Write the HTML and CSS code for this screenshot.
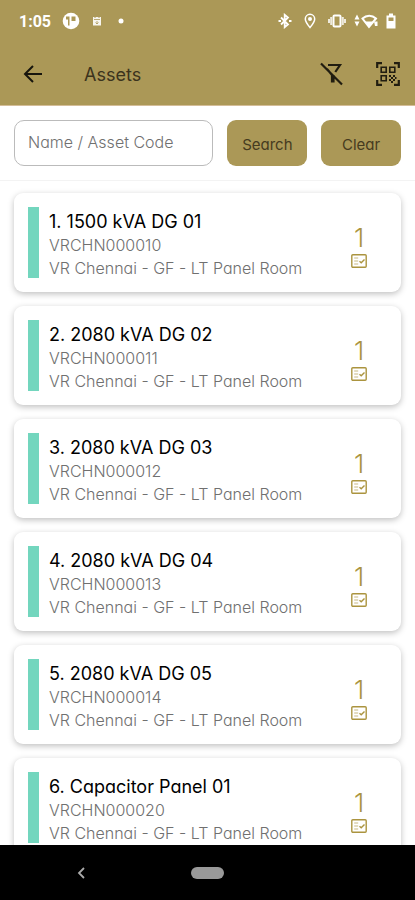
FILE: index.html
```html
<!DOCTYPE html>
<html lang="en">
<head>
<meta charset="utf-8">
<meta name="viewport" content="width=device-width, initial-scale=1">
<title>Assets</title>
<link rel="stylesheet" href="styles.css">
</head>
<body>
<svg class="defs" aria-hidden="true">
  <symbol id="checklist" viewBox="0 0 18 16">
    <rect x="1.8" y="1.8" width="14.4" height="12.4" rx="1" fill="none" stroke="currentColor" stroke-width="1.4"/>
    <path d="M4.2 5h4M4.2 8h4M4.2 11h4" stroke="currentColor" stroke-width="1" opacity=".65"/>
    <path d="M9.5 8.3l1.7 1.5 3.3-3.3" fill="none" stroke="currentColor" stroke-width="1.4"/>
  </symbol>
</svg>
<header class="top">
  <div class="status">
    <div class="status-left">
      <span class="time">1:05</span>
      <svg width="18" height="18" viewBox="0 0 18 18"><circle cx="9" cy="9" r="8.3" fill="#fff"/><path d="M4 4.500h3.500v9H6v-6H4zM9.500 4.500h4v4.500h-4z" fill="#ab9857"/></svg>
      <svg width="10" height="10" viewBox="0 0 10 10"><path d="M1 1h1.5v1h1V1h3v1h1V1H9v8.5H1z" fill="#fff" opacity=".9"/><path d="M2 3.5h6M5 5v3M3.5 6.5L5 8l1.5-1.5" fill="none" stroke="#ab9857" stroke-width=".8"/></svg>
      <svg width="6" height="6" viewBox="0 0 6 6"><circle cx="3" cy="3" r="2.5" fill="#fff"/></svg>
    </div>
    <div class="status-right">
      <svg width="14" height="16" viewBox="0 0 14 16"><path d="M3 4.5l7 7L6.700 14.200V1.800L10 4.500l-7 7" fill="none" stroke="#fff" stroke-width="1.800"/><path d="M.5 8h2.500M11 8h2.500" stroke="#fff" stroke-width="1.800"/></svg>
      <svg width="12" height="16" viewBox="0 0 12 16"><path d="M6 14.500C3 11 1.300 8.500 1.300 6a4.700 4.700 0 0 1 9.400 0c0 2.500-1.700 5-4.700 8.500z" fill="none" stroke="#fff" stroke-width="1.500"/><circle cx="6" cy="6" r="2" fill="#fff"/></svg>
      <svg width="18" height="16" viewBox="0 0 18 16"><rect x="5.500" y="2.500" width="7" height="11" rx="1" fill="none" stroke="#fff" stroke-width="2"/><path d="M3.200 4v8M14.800 4v8M1 6v4M17 6v4" stroke="#fff" stroke-width="2" opacity=".8"/></svg>
      <svg class="wifi" width="24" height="16" viewBox="0 0 24 16"><path d="M3 1.500l2.500 5h-5zM3 13.500l2.500-5h-5z" fill="#fff"/><path d="M8.500 5.500c4-3.700 9.500-3.700 13.500 0L15 14z" fill="none" stroke="#fff" stroke-width="2"/><path d="M11 8.500h8L15 14zM20 8.500h3.500V13H21z" fill="#fff"/></svg>
      <svg width="10" height="16" viewBox="0 0 10 16"><path d="M3 .5h4v2h2.500v13H.5v-13H3z" fill="#fff"/><path d="M2.500 4.500h5V8h-5z" fill="#ab9857"/></svg>
    </div>
  </div>
  <div class="appbar">
    <button class="icon-button" aria-label="Back"><svg width="24" height="24" viewBox="0 0 24 24"><path d="M21 12H4M12 4l-8 8 8 8" fill="none" stroke="#17150d" stroke-width="2"/></svg></button>
    <h1>Assets</h1>
    <button class="icon-button" aria-label="Clear filters"><svg width="24" height="24" viewBox="0 0 24 24"><path d="M1 1.500l21 21M8 3h12L15.300 10M7 7l5 6v6.500h1.500V13" fill="none" stroke="#211d10" stroke-width="2.200"/></svg></button>
    <button class="icon-button" aria-label="Scan code"><svg width="24" height="24" viewBox="0 0 24 24" fill="none" stroke="#211d10"><path d="M1.200 6V1.200H6M18 1.200h4.800V6M1.200 18v4.800H6M18 22.800h4.800V18" stroke-width="2.200"/><path d="M5.200 5.200h5v5h-5zM13.800 5.200h5v5h-5zM5.200 13.800h5v5h-5z" stroke-width="1.600"/><path d="M13 14h2M17 14h2M15 16h2M13 18h2M17 18h2M19 16h1.500M15 20h2" stroke-width="2"/></svg></button>
  </div>
</header>
<form class="search">
  <input type="text" aria-label="Name / Asset Code" placeholder="Name / Asset Code">
  <button type="button">Search</button>
  <button type="button">Clear</button>
</form>
<main>
  <ul class="assets">
    <li class="card"><span class="bar"></span><div class="info"><h2>1. 1500 kVA DG 01</h2><p>VRCHN000010</p><p>VR Chennai - GF - LT Panel Room</p></div><div class="count"><span>1</span><svg width="18" height="16"><use href="#checklist"/></svg></div></li>
    <li class="card"><span class="bar"></span><div class="info"><h2>2. 2080 kVA DG 02</h2><p>VRCHN000011</p><p>VR Chennai - GF - LT Panel Room</p></div><div class="count"><span>1</span><svg width="18" height="16"><use href="#checklist"/></svg></div></li>
    <li class="card"><span class="bar"></span><div class="info"><h2>3. 2080 kVA DG 03</h2><p>VRCHN000012</p><p>VR Chennai - GF - LT Panel Room</p></div><div class="count"><span>1</span><svg width="18" height="16"><use href="#checklist"/></svg></div></li>
    <li class="card"><span class="bar"></span><div class="info"><h2>4. 2080 kVA DG 04</h2><p>VRCHN000013</p><p>VR Chennai - GF - LT Panel Room</p></div><div class="count"><span>1</span><svg width="18" height="16"><use href="#checklist"/></svg></div></li>
    <li class="card"><span class="bar"></span><div class="info"><h2>5. 2080 kVA DG 05</h2><p>VRCHN000014</p><p>VR Chennai - GF - LT Panel Room</p></div><div class="count"><span>1</span><svg width="18" height="16"><use href="#checklist"/></svg></div></li>
    <li class="card"><span class="bar"></span><div class="info"><h2>6. Capacitor Panel 01</h2><p>VRCHN000020</p><p>VR Chennai - GF - LT Panel Room</p></div><div class="count"><span>1</span><svg width="18" height="16"><use href="#checklist"/></svg></div></li>
  </ul>
</main>
<nav class="system">
  <button aria-label="System back"><svg width="10" height="14" viewBox="0 0 10 14"><path d="M8 2L3 7l5 5" fill="none" stroke="#aaa" stroke-width="1.800"/></svg></button>
  <button class="home" aria-label="Home"></button>
</nav>
</body>
</html>
```
FILE: styles.css
```css
* { box-sizing: border-box; }
body {
  margin: 0;
  height: 100vh;
  display: flex;
  flex-direction: column;
  overflow: hidden;
  background: #fff;
  font-family: Inter, "Liberation Sans", sans-serif;
  font-feature-settings: "cv11";
}
h1, h2, p, ul { margin: 0; padding: 0; font-weight: 400; }
button, input { font: inherit; font-feature-settings: inherit; }
button { padding: 0; border: 0; background: none; }
svg { display: block; }
.defs { position: absolute; width: 0; height: 0; }

.top { background: #ab9857; border-bottom: 1px solid #d4bd98; }
.status {
  height: 42px;
  padding: 0 19px;
  display: flex;
  align-items: center;
  justify-content: space-between;
}
.status-left { display: flex; align-items: center; gap: 12px; }
.status-left svg:last-child { margin-left: 4px; }
.status-left svg:nth-child(2) { margin-left: -1px; }
.status-right { display: flex; align-items: center; gap: 12px; }
.wifi { margin: 0 -4px; }
.time { color: #fff; font: 700 16px Roboto, sans-serif; }
.appbar {
  height: 63px;
  padding: 0 15px 0 21px;
  display: flex;
  align-items: center;
  gap: 32px;
}
.appbar h1 { flex: 1; padding: 2px 0 0 7px; font-size: 18px; color: #3b331d; }

.search {
  padding: 14px;
  display: grid;
  grid-template-columns: 5fr 2fr 2fr;
  gap: 14px;
  border-bottom: 1px solid #f3f3f3;
}
.search input {
  width: 100%;
  min-width: 0;
  height: 46px;
  padding: 0 13px 2px;
  border: 1px solid #bbb;
  border-radius: 10px;
  background: #fff;
  font-size: 16px;
  font-weight: 300;
}
.search input::placeholder { color: #707070; opacity: 1; }
.search button {
  height: 46px;
  padding-top: 2px;
  border-radius: 9px;
  background: #ab9857;
  color: #463b20;
  font-size: 15px;
}

main { flex: 1; min-height: 0; overflow: hidden; }
.assets {
  padding: 12px 14px;
  display: flex;
  flex-direction: column;
  gap: 14px;
  list-style: none;
}
.card {
  flex: none;
  padding: 14px 14px 12px;
  display: flex;
  gap: 10px;
  border-radius: 9px;
  background: #fff;
  box-shadow: 0 2px 6px rgba(0, 0, 0, .25);
}
.bar { width: 11px; height: 71px; background: #73d6be; }
.info { flex: 1; padding-top: 3px; }
.info h2 { font-size: 18px; line-height: 24px; color: #000; }
.info p { font-size: 16px; line-height: 23px; font-weight: 300; color: #707070; }
.count {
  width: 56px;
  padding-top: 15px;
  display: flex;
  flex-direction: column;
  align-items: center;
  color: #ab943f;
}
.count span { font-size: 26px; line-height: 31px; font-weight: 300; }

.system {
  height: 55px;
  display: grid;
  grid-template-columns: 2fr 1fr 2fr;
  place-items: center;
  background: #000;
}
.system button:first-child { margin-right: 5px; }
.home { width: 33px; height: 12px; border-radius: 6px; background: #999; }
```
